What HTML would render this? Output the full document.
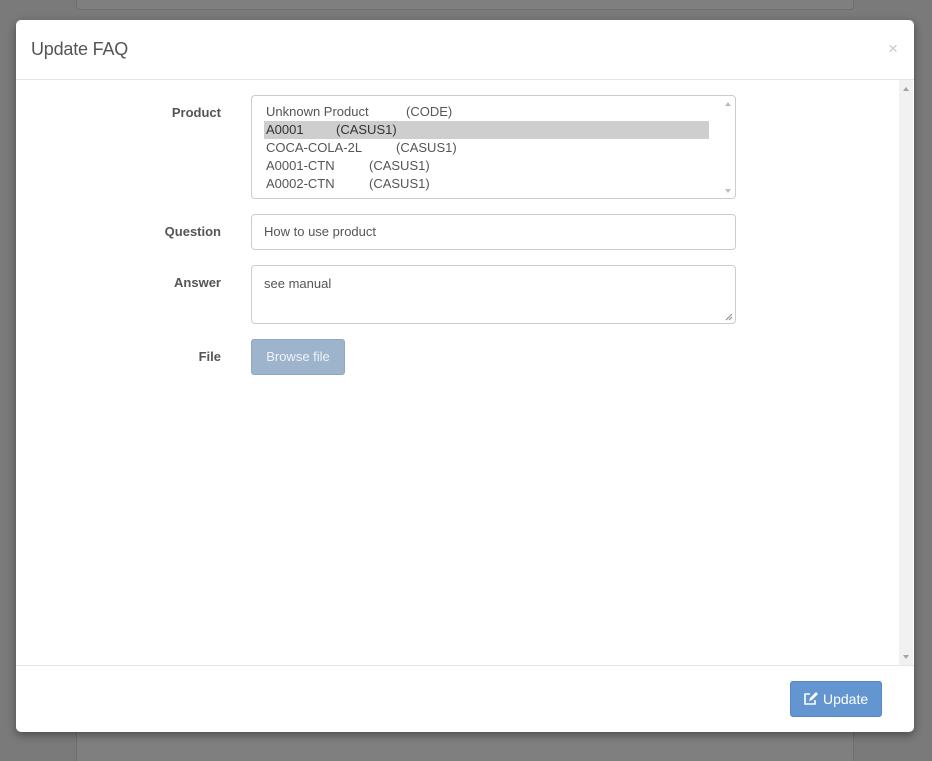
<!DOCTYPE html>
<html><head><style>
*{box-sizing:border-box}
body{margin:0;width:932px;height:749px;background:#7a7a7a;font-family:"Liberation Sans",sans-serif;position:relative;overflow:hidden}
.bg{position:absolute;left:76px;top:-10px;width:778px;height:20px;background:#7f7f7f;border:1px solid #6e6e6e;border-radius:4px}
.bg2{position:absolute;left:76px;top:731px;width:778px;height:30px;background:#7f7f7f;border-left:1px solid #6e6e6e;border-right:1px solid #6e6e6e}
.modal{position:absolute;left:16px;top:20px;width:898px;height:712px;background:#fff;border-radius:5px;box-shadow:0 3px 9px rgba(0,0,0,.4);overflow:hidden}
.hdr{height:60px;border-bottom:1px solid #e5e5e5;position:relative}
.hdr h4{margin:0;position:absolute;left:15px;top:19px;font-size:18px;letter-spacing:-0.2px;font-weight:normal;color:#555}
.x{position:absolute;right:16px;top:19px;color:#c8c8c8;font-size:17px}
.body{position:absolute;top:60px;left:0;width:898px;height:585px}
.sb{position:absolute;right:1px;top:0;width:14px;height:585px;background:#f1f1f1}
.sb .u,.sb .d{position:absolute;left:4px;width:0;height:0;border-left:3px solid transparent;border-right:3px solid transparent}
.sb .u{top:7px;border-bottom:4px solid #a3a3a3}
.sb .d{bottom:6px;border-top:4px solid #a3a3a3}
.lbl{position:absolute;width:205px;text-align:right;font-weight:bold;font-size:13px;color:#555}
.sel{position:absolute;left:235px;top:15px;width:485px;height:104px;border:1px solid #ccc;border-radius:4px;padding:7px 0 0 12px;font-size:13px;color:#555}
.sel div{height:18px;line-height:18px;padding-left:2px;width:445px}
.sel .on{background:#cecece;color:#333}
.sel .s{display:inline-block}
.ssb .u,.ssb .d{position:absolute;right:4px;width:0;height:0;border-left:3px solid transparent;border-right:3px solid transparent}
.inp{position:absolute;left:235px;width:485px;border:1px solid #ccc;border-radius:4px;font-size:13px;color:#555;padding:9px 12px}
.grip{position:absolute;right:2px;bottom:2px}
.btn{position:absolute;left:235px;top:259px;width:94px;height:36px;background:#9db4cc;border:1px solid #8fa8c4;border-radius:3px;color:#eef3f8;font-size:13px;text-align:center;line-height:34px}
.ftr{position:absolute;top:645px;left:0;width:898px;height:67px;border-top:1px solid #e5e5e5}
.up{position:absolute;left:774px;top:15px;width:92px;height:36px;background:#6395d0;border:1px solid #5787c2;border-radius:3px;color:#fff;font-size:14px;line-height:34px;padding-left:32px}
.up svg{position:absolute;left:12px;top:10px}
</style></head><body>
<div class="bg"></div><div class="bg2"></div>
<div class="modal">
<div class="hdr"><h4>Update FAQ</h4><span class="x">×</span></div>
<div class="body">
<div class="lbl" style="top:25px">Product</div>
<div class="sel">
<div><span class="s" style="width:140px">Unknown Product</span>(CODE)</div>
<div class="on"><span class="s" style="width:70px">A0001</span>(CASUS1)</div>
<div><span class="s" style="width:130px">COCA-COLA-2L</span>(CASUS1)</div>
<div><span class="s" style="width:103px">A0001-CTN</span>(CASUS1)</div>
<div><span class="s" style="width:103px">A0002-CTN</span>(CASUS1)</div>
<span class="ssb"><span class="u" style="top:6px;border-bottom:4px solid #bbb"></span><span class="d" style="bottom:5px;border-top:4px solid #bbb"></span></span>
</div>
<div class="lbl" style="top:144px">Question</div>
<div class="inp" style="top:134px;height:36px">How to use product</div>
<div class="lbl" style="top:195px">Answer</div>
<div class="inp" style="top:185px;height:59px;padding-top:10px">see manual<svg class="grip" width="8" height="8" viewBox="0 0 8 8"><path d="M7 1L1 7M7 4L4 7" stroke="#888" stroke-width="1"/></svg></div>
<div class="lbl" style="top:269px">File</div>
<div class="btn">Browse file</div>
<div class="sb"><span class="u"></span><span class="d"></span></div>
</div>
<div class="ftr"><div class="up"><svg width="15" height="14" viewBox="0 0 15 14"><path d="M7 2H2v10h10V8" fill="none" stroke="#fff" stroke-width="1.6"/><path d="M6 9l1-3 6-6 2 2-6 6z" fill="#fff"/></svg>Update</div></div>
</div>
</body></html>
